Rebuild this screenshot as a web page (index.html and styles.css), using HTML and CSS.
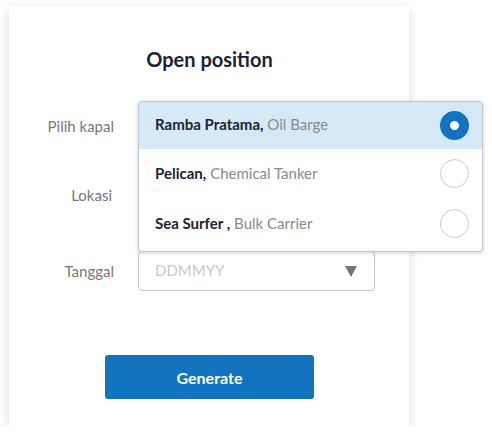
FILE: index.html
```html
<!DOCTYPE html>
<html>
<head>
<meta charset="utf-8">
<link rel="stylesheet" href="styles.css">
</head>
<body>
<div class="card">
  <h1 class="title">Open position</h1>
  <div class="form">
    <label class="label">Pilih kapal</label>
    <div class="field field-ship">
      <div class="select"></div>
      <ul class="menu">
        <li class="option selected"><span class="opt-text"><b>Ramba Pratama,</b> Oil Barge</span><span class="radio"></span></li>
        <li class="option"><span class="opt-text"><b>Pelican,</b> Chemical Tanker</span><span class="radio"></span></li>
        <li class="option option-last"><span class="opt-text"><b>Sea Surfer ,</b> Bulk Carrier</span><span class="radio"></span></li>
      </ul>
    </div>
    <label class="label label-lokasi">Lokasi</label>
    <div class="field"><div class="select"></div></div>
    <label class="label">Tanggal</label>
    <div class="field">
      <div class="select"><span class="placeholder">DDMMYY</span><span class="caret"></span></div>
    </div>
  </div>
  <button class="btn">Generate</button>
</div>
</body>
</html>
```
FILE: styles.css
```css
* { box-sizing: border-box; }
body {
  margin: 0;
  background: #fff;
  font-family: Lato, "Open Sans", sans-serif;
}
.card {
  margin: 6px 0 0 9px;
  width: 400px;
  height: 420px;
  background: #fff;
  box-shadow: 0 3px 10px rgba(0,0,0,0.15);
  display: flex;
  flex-direction: column;
  align-items: center;
  padding-top: 41px;
}
.title {
  margin: 0 0 35px;
  font-size: 20px;
  line-height: 24px;
  font-weight: 700;
  color: #1e2233;
  padding-left: 1px;
}
.form {
  align-self: stretch;
  display: grid;
  grid-template-columns: 105px 237px;
  grid-auto-rows: 40px;
  column-gap: 24px;
  row-gap: 32.5px;
}
.label {
  justify-self: end;
  align-self: center;
  font-size: 15px;
  color: #787878;
}
.label-lokasi { margin-top: -7px; margin-right: 2px; }
.field { position: relative; }
.select {
  height: 40px;
  border: 1px solid #c4c4c4;
  border-radius: 4px;
  display: flex;
  align-items: center;
  padding: 0 16px;
  justify-content: space-between;
}
.placeholder {
  color: #c9c9c9;
  font-size: 15px;
  margin-bottom: 2px;
}
.caret {
  width: 0;
  height: 0;
  border-left: 6.5px solid transparent;
  border-right: 6.5px solid transparent;
  border-top: 11px solid #767676;
  margin-right: 1px;
  margin-top: 1px;
}
.menu {
  position: absolute;
  top: -5px;
  left: 0;
  width: 345px;
  margin: 0;
  padding: 0;
  list-style: none;
  background: #fff;
  border: 1px solid #c3c7cb;
  border-radius: 4px;
  box-shadow: 0 1px 5px rgba(0,0,0,0.18);
  overflow: hidden;
  z-index: 2;
}
.option {
  height: 50px;
  display: flex;
  align-items: center;
  justify-content: space-between;
  padding: 0 13px 0 16px;
  font-size: 15px;
  color: #8a8a8a;
}
.opt-text { margin-bottom: 3px; }
.option.selected { height: 47px; background: #d5e9f6; }
.option-last { height: 52px; padding-bottom: 2px; }
.option b { color: #1e2233; font-weight: 700; }
.radio {
  width: 29px;
  height: 29px;
  border-radius: 50%;
  border: 1px solid #cacaca;
  background: #fff;
  margin-bottom: 1px;
}
.selected .radio {
  border: 10px solid #1273c0;
}
.btn {
  margin-top: 64px;
  width: 209px;
  height: 44px;
  border: none;
  border-radius: 3px;
  background: #1273be;
  color: #fff;
  font-family: Lato, "Open Sans", sans-serif;
  font-size: 16px;
  font-weight: 700;
  margin-left: 1px;
}
```
